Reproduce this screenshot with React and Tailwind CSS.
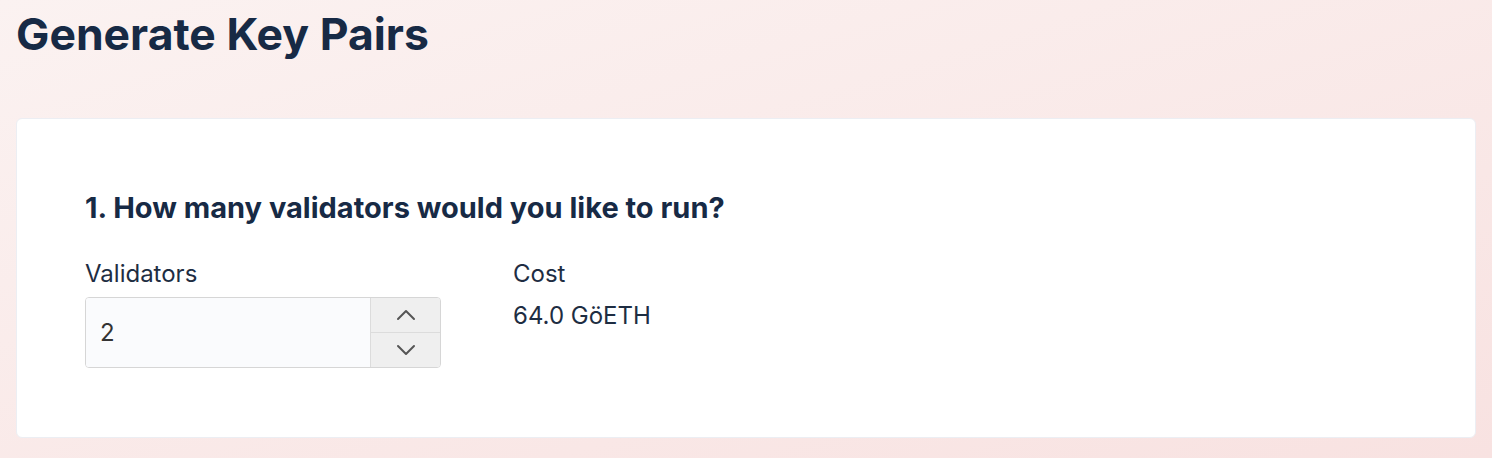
import React, { useState } from 'react';

export default function App() {
    const [count, setCount] = useState(2);

    return (
        <div className="min-h-[458px] w-[1492px] bg-gradient-to-br from-[#fbf2f1] to-[#f8e2e1] px-4 pt-[7px] pb-5" style={{ fontFamily: 'Inter, "Noto Sans", sans-serif' }}>
            <h1 className="text-[44.5px] leading-[54px] font-bold text-[#172a45]">Generate Key Pairs</h1>

            <div className="mt-[57px] bg-white rounded-[6px] border border-[#eceef3] h-[320px] pl-[68px] pt-[72px]">
                <h2 className="text-[29px] leading-[34px] font-bold text-[#172a45]">1. How many validators would you like to run?</h2>

                <div className="flex gap-[72px] mt-[34px]">
                    <div>
                        <label className="block text-[24px] leading-[30px] text-[#1e2d42]">Validators</label>
                        <div className="mt-[8px] flex w-[356px] h-[71px] border border-[#d6d6d6] rounded-[4px] overflow-hidden">
                            <div className="flex-1 bg-[#fafbfd] flex items-center pl-[14px] text-[24px] text-[#333]">{count}</div>
                            <div className="w-[70px] flex flex-col border-l border-[#dcdcdc] bg-[#efefef]">
                                <button onClick={() => setCount(count + 1)} className="flex-1 flex items-center justify-center border-b border-[#dcdcdc]">
                                    <svg width="20" height="12" viewBox="0 0 20 12" fill="none" stroke="#555" strokeWidth="2" strokeLinecap="round" strokeLinejoin="round"><polyline points="2,10 10,2 18,10" /></svg>
                                </button>
                                <button onClick={() => setCount(Math.max(0, count - 1))} className="flex-1 flex items-center justify-center">
                                    <svg width="20" height="12" viewBox="0 0 20 12" fill="none" stroke="#555" strokeWidth="2" strokeLinecap="round" strokeLinejoin="round"><polyline points="2,2 10,10 18,2" /></svg>
                                </button>
                            </div>
                        </div>
                    </div>
                    <div>
                        <div className="text-[24px] leading-[30px] text-[#1e2d42]">Cost</div>
                        <div className="mt-[12px] text-[24px] leading-[30px] text-[#1e2d42]">{(count * 32).toFixed(1)} GöETH</div>
                    </div>
                </div>
            </div>
        </div>
    );
}
